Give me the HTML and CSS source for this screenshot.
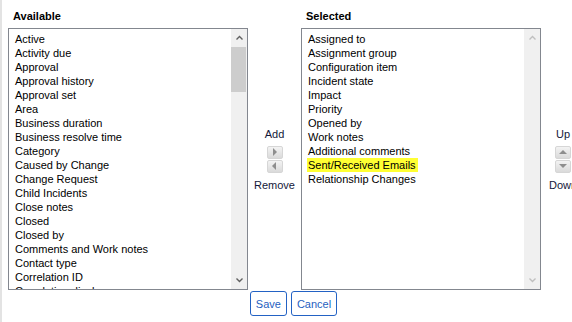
FILE: index.html
```html
<!DOCTYPE html>
<html lang="en">

<head>
    <meta charset="UTF-8">
    <meta name="viewport" content="width=device-width, initial-scale=1.0">
    <title>Column picker</title>
    <link rel="stylesheet" href="styles.css">
</head>

<body>
    <div class="page">
        <div class="picker">
            <!-- Column headers -->
            <div class="col-title">Available</div>
            <div></div>
            <div class="col-title">Selected</div>
            <div></div>

            <!-- Available list -->
            <div class="listbox">
                <ul class="options">
                    <li>Active</li>
                    <li>Activity due</li>
                    <li>Approval</li>
                    <li>Approval history</li>
                    <li>Approval set</li>
                    <li>Area</li>
                    <li>Business duration</li>
                    <li>Business resolve time</li>
                    <li>Category</li>
                    <li>Caused by Change</li>
                    <li>Change Request</li>
                    <li>Child Incidents</li>
                    <li>Close notes</li>
                    <li>Closed</li>
                    <li>Closed by</li>
                    <li>Comments and Work notes</li>
                    <li>Contact type</li>
                    <li>Correlation ID</li>
                    <li>Correlation display</li>
                    <li>Created</li>
                </ul>
                <div class="scrollbar">
                    <span class="arrow">
                        <svg width="7" height="5" viewBox="0 0 7 5"><polyline points="0.5,4.5 3.5,1.5 6.5,4.5" /></svg>
                    </span>
                    <span class="thumb"></span>
                    <span class="track"></span>
                    <span class="arrow">
                        <svg width="7" height="5" viewBox="0 0 7 5"><polyline points="0.5,0.5 3.5,3.5 6.5,0.5" /></svg>
                    </span>
                </div>
            </div>

            <!-- Add / Remove -->
            <div class="mover">
                <span>Add</span>
                <div class="mover-buttons">
                    <button class="move-btn"><span class="tri tri-right"></span></button>
                    <button class="move-btn"><span class="tri tri-left"></span></button>
                </div>
                <span>Remove</span>
            </div>

            <!-- Selected list -->
            <div class="listbox">
                <ul class="options">
                    <li>Assigned to</li>
                    <li>Assignment group</li>
                    <li>Configuration item</li>
                    <li>Incident state</li>
                    <li>Impact</li>
                    <li>Priority</li>
                    <li>Opened by</li>
                    <li>Work notes</li>
                    <li>Additional comments</li>
                    <li><span class="highlight">Sent/Received Emails</span></li>
                    <li>Relationship Changes</li>
                </ul>
                <div class="scrollbar disabled">
                    <span class="arrow">
                        <svg width="7" height="5" viewBox="0 0 7 5"><polyline points="0.5,4.5 3.5,1.5 6.5,4.5" /></svg>
                    </span>
                    <span class="track"></span>
                    <span class="arrow">
                        <svg width="7" height="5" viewBox="0 0 7 5"><polyline points="0.5,0.5 3.5,3.5 6.5,0.5" /></svg>
                    </span>
                </div>
            </div>

            <!-- Up / Down -->
            <div class="mover">
                <span>Up</span>
                <div class="mover-buttons">
                    <button class="move-btn"><span class="tri tri-up"></span></button>
                    <button class="move-btn"><span class="tri tri-down"></span></button>
                </div>
                <span>Down</span>
            </div>
        </div>

        <div class="actions">
            <button class="action-btn">Save</button>
            <button class="action-btn">Cancel</button>
        </div>
    </div>
</body>

</html>
```

FILE: styles.css
```css
body {
    font-family: "Liberation Sans", Arial, sans-serif;
    font-size: 11px;
    margin: 0;
    padding: 0;
    background-color: #ffffff;
    color: #000000;
    overflow: hidden;
}

.page {
    box-sizing: border-box;
    min-height: 322px;
    width: 600px;
    border-left: 2px solid #e3e3e3; /* frame edge on the left */
    padding-left: 6px;
}

.picker {
    display: grid;
    grid-template-columns: 240px 53px 240px 44px;
    grid-template-rows: 28px 262px;
}

.col-title {
    font-weight: bold;
    line-height: 14px;
    padding: 9px 0 0 5px;
}

/* List boxes */
.listbox {
    box-sizing: border-box;
    display: flex;
    border: 1px solid #83878f;
    background-color: #ffffff;
    overflow: hidden;
}

.options {
    flex: 1;
    list-style: none;
    margin: 0;
    padding: 3px 0 0 6px;
    overflow: hidden;
    line-height: 14px;
}

.options li {
    white-space: nowrap;
}

.highlight {
    display: inline-block;
    background-color: #ffff33;
    margin-left: -1px;
    padding: 0 2px 0 1px;
}

/* Fake scrollbar */
.scrollbar {
    width: 16px;
    display: flex;
    flex-direction: column;
    background-color: #f0f0f0;
}

.scrollbar .arrow {
    height: 17px;
    display: flex;
    align-items: center;
    justify-content: center;
}

.scrollbar svg polyline {
    fill: none;
    stroke: #606060;
    stroke-width: 1.4;
}

.scrollbar.disabled svg polyline {
    stroke: #bfbfbf;
}

.scrollbar .thumb {
    height: 45px;
    margin: 1px 1px 0 0;
    background-color: #cdcdcd;
}

.scrollbar .track {
    flex: 1;
}

/* Add / Remove and Up / Down */
.mover {
    display: flex;
    flex-direction: column;
    align-items: center;
    justify-content: center;
    gap: 5px;
    line-height: 14px;
    color: #14183a;
    white-space: nowrap;
}

.mover-buttons {
    display: flex;
    flex-direction: column;
    gap: 1px;
}

.move-btn {
    box-sizing: border-box;
    width: 16px;
    height: 13px;
    padding: 0;
    display: flex;
    align-items: center;
    justify-content: center;
    border: 1px solid #d6d6d6;
    border-radius: 2px;
    background: linear-gradient(#f3f3f3, #dadada);
}

.tri {
    width: 0;
    height: 0;
    border: 4px solid transparent;
}

.tri-right {
    border-left: 4px solid #8e8e8e;
    border-right-width: 0;
    margin-left: 1px;
}

.tri-left {
    border-right: 4px solid #8e8e8e;
    border-left-width: 0;
    margin-right: 1px;
}

.tri-up {
    border-bottom: 4px solid #8e8e8e;
    border-top-width: 0;
}

.tri-down {
    border-top: 4px solid #8e8e8e;
    border-bottom-width: 0;
}

/* Save / Cancel */
.actions {
    width: 571px;
    display: flex;
    justify-content: center;
    gap: 4px;
    margin-top: 1px;
}

.action-btn {
    height: 25px;
    padding: 0 5px;
    font-family: "Liberation Sans", Arial, sans-serif;
    font-size: 11px;
    color: #1f5fbf;
    background-color: #ffffff;
    border: 1px solid #2362c4;
    border-radius: 3px;
    cursor: pointer;
}

.action-btn:hover {
    background-color: #eef4fc;
}
```
